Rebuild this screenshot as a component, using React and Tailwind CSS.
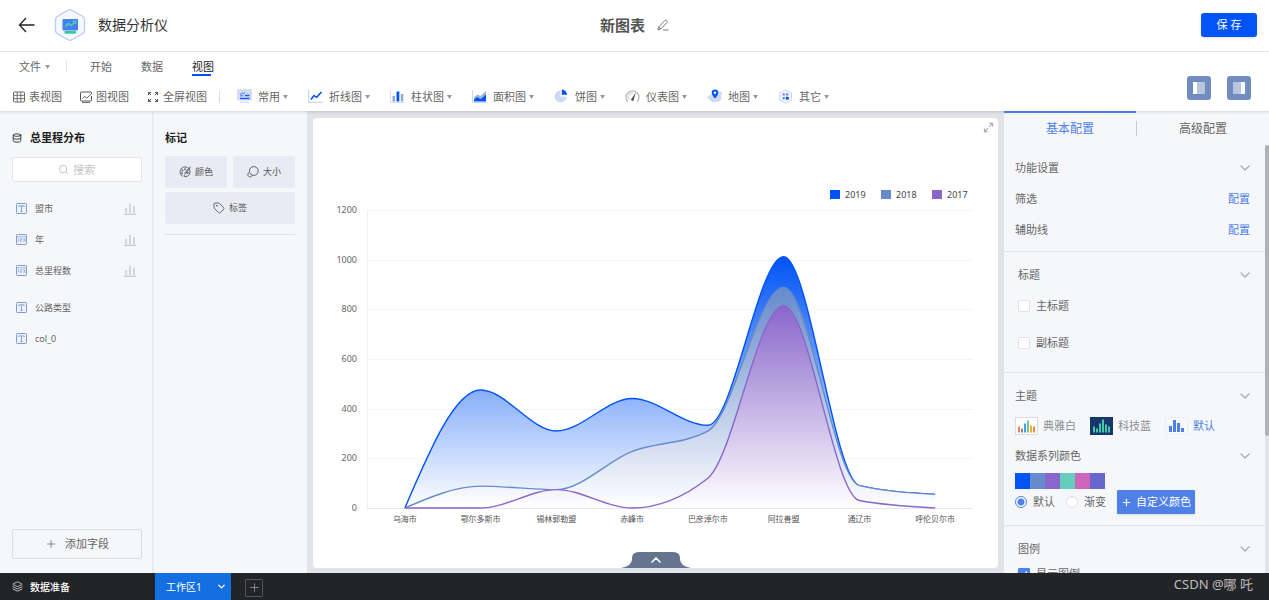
import { useState } from 'react'
import { ChevronDown, ChevronUp, Database, Layers, Maximize2, Plus, Search, Tag } from 'lucide-react'

const CATEGORIES = ['乌海市', '鄂尔多斯市', '锡林郭勒盟', '赤峰市', '巴彦淖尔市', '阿拉善盟', '通辽市', '呼伦贝尔市']

const SERIES = [
  { name: '2019', color: '#0054f5', data: [0, 475, 310, 441, 333, 1012, 90, 55] },
  { name: '2018', color: '#668acc', data: [0, 88, 74, 228, 310, 888, 90, 55] },
  { name: '2017', color: '#8966cc', data: [0, 0, 74, 0, 120, 815, 30, 0] },
]

const PALETTE = ['#0054f5', '#668acc', '#8966cc', '#66ccbb', '#cc66bb', '#6966cc']

const PLOT = { left: 54, right: 660, top: 92, bottom: 390, max: 1200 }
const STEP = (PLOT.right - PLOT.left) / CATEGORIES.length
const TICKS = [0, 200, 400, 600, 800, 1000, 1200]

const toX = i => PLOT.left + STEP * (i + 0.5)
const toY = v => PLOT.bottom - (v / PLOT.max) * (PLOT.bottom - PLOT.top)

// monotone cubic curve: flat at the peaks, never overshoots the data
function smoothPath(points) {
  const last = points.length - 1
  const slopes = points.slice(1).map((p, i) => (p.y - points[i].y) / (p.x - points[i].x))
  const tangents = points.map((_, i) => {
    if (i === 0 || i === last) return 0
    const a = slopes[i - 1]
    const b = slopes[i]
    if (a * b <= 0) return 0
    return Math.sign(a) * 2 * Math.min(Math.abs(a), Math.abs(b), Math.abs(a + b) / 4)
  })
  tangents[0] = (3 * slopes[0] - tangents[1]) / 2
  tangents[last] = (3 * slopes[last - 1] - tangents[last - 1]) / 2

  let d = `M${points[0].x},${points[0].y}`
  for (let i = 1; i <= last; i++) {
    const p = points[i - 1]
    const q = points[i]
    const dx = (q.x - p.x) / 3
    d += ` C${p.x + dx},${p.y + dx * tangents[i - 1]} ${q.x - dx},${q.y - dx * tangents[i]} ${q.x},${q.y}`
  }
  return d
}

function AreaChart() {
  return (
    <svg viewBox="0 0 685 450" className="w-full h-full" role="img" aria-label="总里程分布">
      <defs>
        {SERIES.map(s => (
          <linearGradient key={s.name} id={`fill-${s.name}`} x1="0" y1="0" x2="0" y2="1">
            <stop offset="0" stopColor={s.color} />
            <stop offset="1" stopColor="#ffffff" />
          </linearGradient>
        ))}
      </defs>
      {TICKS.map(t => (
        <g key={t}>
          <line
            x1={PLOT.left}
            x2={PLOT.right}
            y1={Math.round(toY(t)) + 0.5}
            y2={Math.round(toY(t)) + 0.5}
            stroke={t === 0 ? '#e6e8f0' : '#f4f4f6'}
          />
          <text x="44" y={toY(t) + 3} fontSize="9" fill="#666" textAnchor="end">{t}</text>
        </g>
      ))}
      <line x1="54.5" x2="54.5" y1={PLOT.top} y2={PLOT.bottom} stroke="#f0f1f6" />
      {SERIES.map(s => {
        const line = smoothPath(s.data.map((v, i) => ({ x: toX(i), y: toY(v) })))
        return (
          <g key={s.name}>
            <path d={`${line} L${toX(7)},${PLOT.bottom} L${toX(0)},${PLOT.bottom} Z`} fill={`url(#fill-${s.name})`} />
            <path d={line} fill="none" stroke={s.color} strokeWidth="1.4" />
          </g>
        )
      })}
      {CATEGORIES.map((c, i) => (
        <text key={c} x={toX(i)} y="404" fontSize="8" fill="#555" textAnchor="middle">{c}</text>
      ))}
      {SERIES.map((s, i) => (
        <g key={s.name}>
          <rect x={517 + i * 51} y="72" width="10" height="9" fill={s.color} />
          <text x={532 + i * 51} y="80" fontSize="9" fill="#444">{s.name}</text>
        </g>
      ))}
    </svg>
  )
}

function Caret() {
  return (
    <svg width="5" height="4" viewBox="0 0 5 4" className="shrink-0">
      <path d="M0 0h5L2.500 4z" fill="#999" />
    </svg>
  )
}

function BackIcon() {
  return (
    <svg width="17" height="16" viewBox="0 0 17 16" fill="none" stroke="#222" strokeWidth="1.300">
      <path d="M8 1L1.500 8 8 15M1.500 8H16.500" />
    </svg>
  )
}

function Logo() {
  return (
    <svg width="32" height="34" viewBox="0 0 32 34">
      <path d="M14 2.200q2-1.100 4 0l10.500 6q2 1.200 2 3.300v11q0 2.100-2 3.300l-10.500 6q-2 1.100-4 0l-10.500-6q-2-1.200-2-3.300v-11q0-2.100 2-3.300z" fill="#f4f8ff" stroke="#b5ccfb" strokeWidth="1.300" />
      <rect x="8.500" y="11" width="15.500" height="11.500" rx="1" fill="#4a7df0" />
      <path d="M11 18.800l3.500-3.200 2.500 2 4.500-4.200M18.600 13.200h3v2.800" fill="none" stroke="#3fd0b5" strokeWidth="1.500" />
      <rect x="10.500" y="23" width="11.500" height="2.800" rx="0.500" fill="#35c9a8" />
    </svg>
  )
}

function PencilIcon() {
  return (
    <svg width="12" height="12" viewBox="0 0 12 12" fill="none" stroke="#666" strokeWidth="0.900" strokeLinejoin="round">
      <path d="M1 11l.7-3L8 1.400q.7-.6 1.400 0l.7.700q.6.700 0 1.400L3.700 10zM1.700 8l2 2M6 11h5.500" />
    </svg>
  )
}

function GridIcon() {
  return (
    <svg width="12" height="12" viewBox="0 0 12 12" fill="none" stroke="#666">
      <rect x="0.500" y="1" width="11" height="10" rx="1" />
      <path d="M.5 4.300h11M.5 7.600h11M4.200 1v10M7.800 1v10" strokeWidth="0.900" />
    </svg>
  )
}

function ChartViewIcon() {
  return (
    <svg width="12" height="12" viewBox="0 0 12 12" fill="none" stroke="#555">
      <path d="M11.500 5V9q0 1-1 1H1.500q-1 0-1-1V2q0-1 1-1h9q1 0 1 1v1" />
      <path d="M2.300 7.500l2.500-2 2 1.500 4.500-4M2 11.600h8" strokeWidth="0.900" />
    </svg>
  )
}

function FullscreenIcon() {
  return (
    <svg width="12" height="12" viewBox="0 0 12 12" fill="none" stroke="#555">
      <path d="M1.500 4V1.500H4M1.500 1.500L4 4M8 1.500h2.500V4M10.500 1.500L8 4M1.500 8v2.500H4M1.500 10.500L4 8M8 10.500h2.500V8M10.500 10.500L8 8" />
    </svg>
  )
}

function CommonIcon() {
  return (
    <svg width="15" height="15" viewBox="0 0 15 15">
      <rect width="15" height="11.500" rx="1" fill="#d3ddf2" />
      <rect x="3" y="12.500" width="9" height="1.300" fill="#d3ddf2" />
      <path d="M3 9.500h9.500M8 6.500h4.500" stroke="#1460f5" strokeWidth="1.300" />
      <path d="M3 6l2-2.200L6.500 5 8 3.200" fill="none" stroke="#4d7fe8" />
      <path d="M3 6.800h3.500" stroke="#4d7fe8" />
    </svg>
  )
}

function LineIcon() {
  return (
    <svg width="15" height="15" viewBox="0 0 15 15" fill="none">
      <path d="M.6 1v12.400H15" stroke="#c9d6f0" strokeWidth="1.200" />
      <path d="M3 10.500l3-4 2.700 1.800L13.500 3" stroke="#0054f5" strokeWidth="1.600" />
    </svg>
  )
}

function BarIcon() {
  return (
    <svg width="15" height="15" viewBox="0 0 15 15">
      <path d="M.5 1v12.500H14" fill="none" stroke="#d3ddf2" />
      <rect x="2.500" y="7" width="2.500" height="5.500" fill="#8fa9dc" />
      <rect x="6.500" y="2.500" width="2.800" height="10" fill="#0054f5" />
      <rect x="10.800" y="5" width="2.500" height="7.500" fill="#8fa9dc" />
    </svg>
  )
}

function AreaIcon() {
  return (
    <svg width="15" height="15" viewBox="0 0 15 15">
      <path d="M.5 1v12.500H14.500" fill="none" stroke="#c9d6f0" />
      <path d="M2 8l3.500-2.500L8.500 7 14 2v5l-4 3.500L2 11z" fill="#9db4de" />
      <path d="M2 12.500v-2l3.500-2.500 3 2.200L14 5.500v7z" fill="#0054f5" />
    </svg>
  )
}

function PieIcon() {
  return (
    <svg width="15" height="15" viewBox="0 0 15 15">
      <path d="M6.500 1.500a6 6 0 1 0 6 6h-6z" fill="#cfd9f0" />
      <path d="M7.800.5v5.300h5.300A5.500 5.500 0 0 0 7.800.5z" fill="#0054f5" />
    </svg>
  )
}

function GaugeIcon() {
  return (
    <svg width="15" height="15" viewBox="0 0 15 15" fill="none">
      <path d="M2.800 12.800a6.500 6.500 0 1 1 9.400 0" stroke="#bbb" strokeWidth="1.300" />
      <path d="M4.500 11a4 4 0 0 1 3.500-6.800" stroke="#d0d0d0" strokeWidth="1.100" />
      <path d="M6 10.500l4.700-7-2.200 8.200q-1.500 1.200-2.500-1.200z" fill="#555" />
    </svg>
  )
}

function MapIcon() {
  return (
    <svg width="15" height="15" viewBox="0 0 15 15">
      <path d="M0 8.500l3-2.700 4-.8 4-2.500 4 .5-1 5 .5 2-3 3-3-.5-3 1-2-2z" fill="#cfd9f0" />
      <path d="M8 .5a3.300 3.300 0 0 1 3.300 3.300Q11.300 6 8 9.500 4.700 6 4.700 3.800A3.300 3.300 0 0 1 8 .5z" fill="#0054f5" />
      <circle cx="8" cy="3.700" r="1.200" fill="#fff" />
    </svg>
  )
}

function OtherIcon() {
  return (
    <svg width="15" height="15" viewBox="0 0 15 15">
      <path d="M7.500.8l6 3.300v6.800l-6 3.300-6-3.300V4.100z" fill="#f2f5fc" stroke="#cdd7ee" />
      <g fill="#6c8fdc">
        <rect x="4.500" y="4.200" width="2.400" height="2.400" rx="0.700" />
        <rect x="8" y="4.200" width="2.400" height="2.400" rx="0.700" />
        <rect x="4.500" y="8" width="2.400" height="2.400" rx="0.700" />
      </g>
      <rect x="7.800" y="7.800" width="3" height="3" rx="0.700" fill="#0054f5" />
    </svg>
  )
}

function FieldIcon({ type }) {
  return (
    <svg width="11" height="11" viewBox="0 0 11 11" fill="none" stroke="#7f9bd0">
      <rect x="0.500" y="0.500" width="10" height="10" rx="0.800" fill="#edf2fb" />
      {type === 'text' ? (
        <path d="M2.800 4V2.900h5.400V4M5.500 2.900v5.400M4.300 8.400h2.400" strokeWidth="0.900" />
      ) : (
        <path d="M.5 2.800h10M2.500 4.500v3M4.200 4.700h1.500v1.200H4.300v1.400h1.600M7.200 4.700h1.600v2.600H7.200M7.400 6h1.400" strokeWidth="0.700" />
      )}
    </svg>
  )
}

function MiniBars() {
  return (
    <svg width="12" height="12" viewBox="0 0 12 12" fill="none" stroke="#b9bbc0">
      <path d="M2 10V5M6 10V.5M10 10V3M0 11.300h12" strokeWidth="1.100" />
    </svg>
  )
}

function ColorIcon() {
  return (
    <svg width="12" height="12" viewBox="0 0 12 12" fill="none" stroke="#555" strokeWidth="0.900">
      <path d="M8.500 1.500a5 5 0 1 0-4.700 9M10.300 3.200a5 5 0 0 1-4.500 7.600q-1.300-.8 0-2.300" />
      <path d="M10.800.7L5.500 7.500M11.300 1.500L6.500 8" />
      <circle cx="3.500" cy="4.500" r="0.600" />
      <circle cx="3" cy="7.200" r="0.600" />
      <circle cx="6" cy="3.200" r="0.600" />
      <circle cx="8.800" cy="7" r="0.600" />
    </svg>
  )
}

function SizeIcon() {
  return (
    <svg width="12" height="12" viewBox="0 0 12 12" fill="none" stroke="#555" strokeWidth="0.900">
      <circle cx="6.800" cy="5" r="4.400" />
      <path d="M2.100 6.500a2.300 2.300 0 1 0 3.200 2.800" />
    </svg>
  )
}

function ThemeIcon({ bg, border, bars }) {
  return (
    <svg width="23" height="18" viewBox="0 0 23 18">
      <rect x="0.500" y="0.500" width="22" height="17" fill={bg} stroke={border} />
      {bars.map(([h, fill], i) => (
        <rect key={i} x={3 + i * 3} y={15.5 - h} width="2" height={h} fill={fill} />
      ))}
    </svg>
  )
}

const VIEWS = [
  { label: '表视图', Icon: GridIcon },
  { label: '图视图', Icon: ChartViewIcon },
  { label: '全屏视图', Icon: FullscreenIcon },
]

const CHART_TYPES = [
  { label: '常用', Icon: CommonIcon },
  { label: '折线图', Icon: LineIcon },
  { label: '柱状图', Icon: BarIcon },
  { label: '面积图', Icon: AreaIcon },
  { label: '饼图', Icon: PieIcon },
  { label: '仪表图', Icon: GaugeIcon },
  { label: '地图', Icon: MapIcon },
  { label: '其它', Icon: OtherIcon },
]

function Header() {
  return (
    <header className="h-[52px] shrink-0 grid grid-cols-[1fr_auto_1fr] items-center border-b border-[#ececee] bg-white pb-[2px]">
      <div className="flex items-center pl-[18px]">
        <button aria-label="返回"><BackIcon /></button>
        <span className="ml-[19px]"><Logo /></span>
        <span className="ml-3 text-[14px] text-[#333]">数据分析仪</span>
      </div>
      <div className="flex items-center gap-3">
        <h1 className="text-[15px] font-bold text-[#555]">新图表</h1>
        <button aria-label="重命名"><PencilIcon /></button>
      </div>
      <div className="flex justify-end pr-3">
        <button className="w-14 h-6 rounded-[3px] bg-[#0054f5] text-[11px] text-white shadow-sm">保 存</button>
      </div>
    </header>
  )
}

function Toolbar() {
  return (
    <div className="relative z-10 h-[59px] shrink-0 flex items-center justify-between bg-white pr-[18px] shadow-[0_1px_3px_rgba(0,0,0,0.15)]">
      <div>
        <nav className="h-[30px] flex items-center pl-[19px]">
          <button className="flex items-center gap-1">文件 <Caret /></button>
          <span className="ml-4 mr-[23px] w-px h-3 bg-[#e4e4e4]" />
          <div className="flex gap-[29px]">
            <button>开始</button>
            <button>数据</button>
            <button className="relative text-[#222]">
              视图
              <span className="absolute left-0 -bottom-px w-[19px] h-[2px] bg-[#0054f5]" />
            </button>
          </div>
        </nav>
        <div className="h-[29px] flex items-center pl-[13px]">
          <div className="flex gap-[18px]">
            {VIEWS.map(({ label, Icon }) => (
              <button key={label} className="flex items-center gap-1"><Icon />{label}</button>
            ))}
          </div>
          <span className="ml-3 mr-[17px] w-px h-3 bg-[#ddd]" />
          <div className="flex gap-5">
            {CHART_TYPES.map(({ label, Icon }) => (
              <button key={label} className="flex items-center whitespace-nowrap">
                <Icon />
                <span className="ml-[6px] mr-[3px]">{label}</span>
                <Caret />
              </button>
            ))}
          </div>
        </div>
      </div>
      <div className="flex gap-4 mt-3">
        <button aria-label="左侧面板" className="size-6 rounded-[3px] bg-[#728cc0] flex items-center justify-center">
          <svg width="12" height="12"><rect width="4" height="12" fill="#fff" /><rect x="4" width="8" height="12" fill="#b9c6e0" /></svg>
        </button>
        <button aria-label="右侧面板" className="size-6 rounded-[3px] bg-[#728cc0] flex items-center justify-center">
          <svg width="12" height="12"><rect width="8" height="12" fill="#b9c6e0" /><rect x="8" width="4" height="12" fill="#fff" /></svg>
        </button>
      </div>
    </div>
  )
}

function Field({ name, type, measured }) {
  return (
    <li className="h-[31px] flex items-center pl-1 pr-[6px]">
      <FieldIcon type={type} />
      <span className="ml-2 flex-1 text-[9px]">{name}</span>
      {measured && <MiniBars />}
    </li>
  )
}

function FieldPanel() {
  return (
    <aside className="w-[154px] shrink-0 flex flex-col border-r-2 border-[#e9ebee] pl-3 pr-[10px] pt-[17px] pb-[14px]">
      <h2 className="flex items-center gap-2 h-5 text-[11px] font-bold text-[#222]">
        <Database size={10} strokeWidth={2} /> 总里程分布
      </h2>
      <div className="relative mt-[9px]">
        <Search size={11} color="#bbb" className="absolute left-[46px] top-[7px]" />
        <input
          aria-label="搜索"
          placeholder="搜索"
          className="w-full h-[25px] rounded-[3px] border border-[#e3e4e8] bg-white pl-[60px] placeholder:text-[#c4c4c4] outline-none"
        />
      </div>
      <ul className="mt-[11px]">
        <Field name="盟市" type="text" measured />
        <Field name="年" type="number" measured />
        <Field name="总里程数" type="number" measured />
      </ul>
      <ul className="mt-[6px]">
        <Field name="公路类型" type="text" />
        <Field name="col_0" type="text" />
      </ul>
      <button className="mt-auto h-[30px] flex items-center justify-center gap-2 rounded-[2px] border border-[#dcdde0]">
        <Plus size={12} strokeWidth={1.5} /> 添加字段
      </button>
    </aside>
  )
}

function MarkButton({ label, children, className = '' }) {
  return (
    <button className={`h-8 flex items-center justify-center gap-1 rounded-[3px] bg-[#e8ebf3] text-[9px] text-[#555] ${className}`}>
      {children}{label}
    </button>
  )
}

function MarkPanel() {
  return (
    <aside className="w-[153px] shrink-0 pl-[11px] pr-3 pt-[17px]">
      <h2 className="h-5 leading-5 text-[11px] font-bold text-[#222]">标记</h2>
      <div className="mt-2 grid grid-cols-2 gap-x-[6px] gap-y-1 border-b border-[#dfe1e5] pb-[10px]">
        <MarkButton label="颜色"><ColorIcon /></MarkButton>
        <MarkButton label="大小"><SizeIcon /></MarkButton>
        <MarkButton label="标签" className="col-span-2"><Tag size={12} strokeWidth={1.8} /></MarkButton>
      </div>
    </aside>
  )
}

function Section({ title, inset, className = '', children }) {
  return (
    <section className={`border-b border-[#e1e3e7] pr-[15px] ${className}`}>
      <SectionTitle inset={inset}>{title}</SectionTitle>
      {children}
    </section>
  )
}

function SectionTitle({ inset, children }) {
  return (
    <div className={`h-[30px] flex items-center justify-between ${inset ? 'pl-[14px]' : 'pl-[11px]'}`}>
      <h3>{children}</h3>
      <button aria-label="展开或收起" className="-mr-[3px]"><ChevronDown size={16} strokeWidth={1.8} color="#aaa" /></button>
    </div>
  )
}

function Check({ label, checked, onChange }) {
  return (
    <label className="flex items-center gap-[6px] pl-[14px]">
      <input
        type="checkbox"
        checked={checked}
        onChange={onChange}
        className="peer sr-only"
      />
      <span className="size-3 flex items-center justify-center rounded-[1px] border border-[#dfe1e5] bg-white peer-checked:border-[#4f80e5] peer-checked:bg-[#4f80e5]">
        {checked && (
          <svg width="8" height="8" viewBox="0 0 8 8" fill="none" stroke="#fff" strokeWidth="1.200"><path d="M1 4l2 2 4-4.500" /></svg>
        )}
      </span>
      {label}
    </label>
  )
}

function Radio({ label, checked, onChange }) {
  return (
    <label className="flex items-center gap-[6px]">
      <input
        type="radio"
        name="colorMode"
        checked={checked}
        onChange={onChange}
        className={`appearance-none size-3 rounded-full border bg-white ${
          checked ? 'border-[#4f80e5] bg-[radial-gradient(circle,#4f80e5_3px,#fff_4px)]' : 'border-[#dfe1e5]'
        }`}
      />
      {label}
    </label>
  )
}

const WHITE_BARS = [[6, '#f0805a'], [4, '#8a7fd0'], [9, '#3fa5e8'], [12, '#7cc58c'], [7, '#e8b820'], [6, '#f0805a']]
const DARK_BARS = [[6, '#3fc8a8'], [4, '#3fc8a8'], [9, '#3fc8a8'], [13, '#3fc8a8'], [8, '#3fc8a8'], [6, '#3fc8a8']]

function ConfigPanel() {
  const [mode, setMode] = useState('default')
  const [checks, setChecks] = useState({ main: false, sub: false, legend: true })
  const toggle = key => setChecks(c => ({ ...c, [key]: !c[key] }))

  return (
    <aside className="w-[265px] shrink-0 flex flex-col">
      <div className="relative z-20 h-[34px] shrink-0 flex items-center text-[12px]">
        <button className="flex-1 h-full border-t-2 border-[#4a7de0] text-[#4f80e5]">基本配置</button>
        <span className="w-px h-[15px] bg-[#c8cacf]" />
        <button className="flex-1 h-full border-t-2 border-transparent">高级配置</button>
      </div>
      <div className="flex-1 min-h-0 flex">
        <div className="flex-1 overflow-hidden">
          <Section title="功能设置" className="pt-2 pb-[6px]">
            <div className="h-[31px] flex items-center justify-between pl-[11px]">
              筛选 <button className="text-[#4f80e5]">配置</button>
            </div>
            <div className="h-[31px] flex items-center justify-between pl-[11px]">
              辅助线 <button className="text-[#4f80e5]">配置</button>
            </div>
          </Section>
          <Section title="标题" inset className="pt-2 pb-2">
            <div className="h-8 flex items-center">
              <Check label="主标题" checked={checks.main} onChange={() => toggle('main')} />
            </div>
            <div className="mt-[5px] mb-[5px] h-8 flex items-center">
              <Check label="副标题" checked={checks.sub} onChange={() => toggle('sub')} />
            </div>
          </Section>
          <Section title="主题" className="pt-2 pb-[11px]">
            <div className="h-[30px] flex items-center gap-[14px] pl-[11px] text-[#8a8d93]">
              <button className="flex items-center gap-[5px]">
                <ThemeIcon bg="#fff" border="#dcdcdc" bars={WHITE_BARS} />典雅白
              </button>
              <button className="flex items-center gap-[5px]">
                <ThemeIcon bg="#17366b" border="#17366b" bars={DARK_BARS} />科技蓝
              </button>
              <button className="flex items-center gap-[5px] text-[#4f80e5]">
                <svg width="23" height="18" viewBox="0 0 23 18" fill="#4f80e5">
                  <rect x="0.500" y="0.500" width="22" height="17" fill="#f7f8fb" stroke="#eceef3" />
                  <rect x="4" y="9" width="3" height="6" />
                  <rect x="8" y="3" width="3" height="12" />
                  <rect x="12" y="6" width="3" height="9" />
                  <rect x="16" y="11" width="3" height="4" />
                </svg>
                默认
              </button>
            </div>
            <SectionTitle>数据系列颜色</SectionTitle>
            <div className="mt-[2px] ml-[11px] flex">
              {PALETTE.map(c => (
                <span key={c} className="w-[15px] h-4" style={{ backgroundColor: c }} />
              ))}
            </div>
            <div className="mt-px flex items-center gap-[11px] pl-[11px]">
              <Radio label="默认" checked={mode === 'default'} onChange={() => setMode('default')} />
              <Radio label="渐变" checked={mode === 'gradient'} onChange={() => setMode('gradient')} />
              <button className="h-6 flex items-center gap-1 px-1 rounded-[1px] bg-[#4f80e5] text-white shadow-sm">
                <Plus size={11} strokeWidth={2.5} /> 自定义颜色
              </button>
            </div>
          </Section>
          <Section title="图例" inset className="pt-2 pb-2">
            <div className="h-5 flex items-center">
              <Check label="显示图例" checked={checks.legend} onChange={() => toggle('legend')} />
            </div>
          </Section>
        </div>
        <div className="w-1 bg-[#e3e4e6]">
          <div className="h-[68%] rounded-full bg-[#b0b1b3]" />
        </div>
      </div>
    </aside>
  )
}

function Footer() {
  return (
    <footer className="h-[27px] shrink-0 flex items-stretch bg-[#232427] text-white">
      <button className="w-[155px] flex items-center gap-[7px] pl-3 text-[10px] font-medium">
        <Layers size={11} strokeWidth={1.5} /> 数据准备
      </button>
      <button className="w-[76px] flex items-center justify-between pl-[11px] pr-1 bg-[#1470e0] text-[10px]">
        工作区1 <ChevronDown size={11} strokeWidth={3} />
      </button>
      <button aria-label="新建工作区" className="ml-[14px] mt-[2px] self-center size-[18px] flex items-center justify-center border border-[#55565a] rounded-[1px] text-[#999]">
        <Plus size={13} strokeWidth={1.5} />
      </button>
      <span className="ml-auto mr-4 mt-[2px] leading-[18px] text-[13px] text-[#bfbfbf]">CSDN @哪 吒</span>
    </footer>
  )
}

export default function App() {
  return (
    <div className="h-screen flex flex-col overflow-hidden bg-[#f5f7fa] font-['Noto_Sans','Noto_Sans_CJK_SC',sans-serif] text-[11px] leading-4 text-[#666]">
      <Header />
      <Toolbar />
      <div className="flex-1 min-h-0 flex">
        <FieldPanel />
        <MarkPanel />
        <main className="flex-1 min-w-0 bg-[#e1e3e8] pl-[6px] pr-[6px] pt-[7px] pb-[5px]">
          <div className="relative h-full rounded bg-white">
            <AreaChart />
            <button aria-label="放大" className="absolute top-1 right-1"><Maximize2 size={11} strokeWidth={2.2} color="#a6a8ad" /></button>
            <button aria-label="展开数据" className="absolute bottom-0 left-1/2 -translate-x-1/2">
              <svg width="70" height="16" viewBox="0 0 70 16">
                <path d="M0 16q11-2 11-9V6q0-6 7-6h34q7 0 7 6v1q0 7 11 9z" fill="#66758f" />
              </svg>
              <ChevronUp size={16} strokeWidth={2.5} color="#fff" className="absolute left-[27px] top-0" />
            </button>
          </div>
        </main>
        <ConfigPanel />
      </div>
      <Footer />
    </div>
  )
}
